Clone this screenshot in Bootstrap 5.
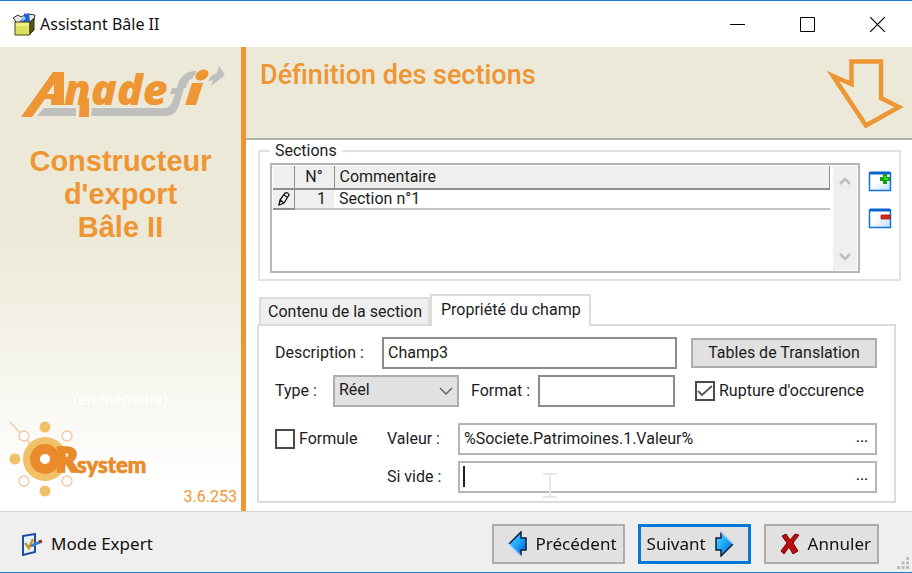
<!DOCTYPE html>
<html lang="fr">
<head>
<meta charset="utf-8">
<meta name="viewport" content="width=device-width, initial-scale=1">
<title>Assistant Bâle II</title>
<link href="https://cdn.jsdelivr.net/npm/bootstrap@5.3.0/dist/css/bootstrap.min.css" rel="stylesheet">
<style>
  body { font: 16px/20px Roboto, "Liberation Sans", sans-serif; color: #1c1c1c; background: #fff; }
  .win { border-top: 1px solid #1a7fd0; border-bottom: 1px solid #1a7fd0; }
  .ui-font { font-family: "Noto Sans", "Open Sans", sans-serif; color: #111; }
  .title-bar { height: 46px; padding-left: 12px; }
  .win-btn { width: 70px; height: 46px; border: 0; background: none; padding: 0; }
  .side { width: 246px; border-right: 5px solid #ee9634; color: #ee9634;
    background: linear-gradient(#ece9d8 0, #ece9d8 40%, #fff 95%); }
  .side-title { font: bold 29px/33px "Liberation Sans", Arial, sans-serif; }
  .memo { color: #fff; }
  .content { min-width: 0; }
  .head { background: #ece9d8; border-bottom: 2px solid #b0b0ac; height: 93px; padding: 11px 8px 0 14px; }
  .head h1 { font: 500 27px/34px Roboto, sans-serif; color: #ee9634; margin: 0; }
  .work { padding: 2px 11px 0 12px; }
  .box { border: 2px solid #e2e2e2; padding: 3px 7px 6px 10px; }
  .box legend { float: none; width: auto; font-size: 16px; line-height: 18px; padding: 0 5px; margin: 0; }
  .grid-box { border: 2px solid #b4b4bc; height: 110px; padding: 1px; }
  .grid-table { width: 100%; border-collapse: collapse; }
  .grid-table th { background: #efefef; font-weight: 400; height: 23px; padding: 0 5px; border-right: 1px solid #8e8e8e; border-bottom: 2px solid #8e8e8e; }
  .grid-table td { height: 20px; padding: 0 5px; border-bottom: 2px solid #c4c4c4; line-height: 18px; }
  .grid-table .dim { background: #efefef; }
  .grid-table .mark-cell { border-right: 1px solid #8e8e8e; border-bottom-color: #8e8e8e; padding: 0 3px; }
  .c-mark { width: 21px; } .c-num { width: 40px; }
  .scroller { width: 24px; margin-left: 3px; background: #efefef; padding: 10px 0 8px; }
  .tool { border: 0; background: none; padding: 0; display: block; }
  .tabs { padding-left: 1px; margin-top: 13px; }
  .tab-btn { font: inherit; color: inherit; border: 2px solid #dcdcdc; border-bottom: 0; background: #efefef; height: 27px; padding: 0 6px 0 7px; }
  .tab-btn.active { background: #fff; height: 32px; padding: 0 8px 3px 9px; margin-bottom: -2px; }
  .pane { border: 2px solid #dcdcdc; padding: 11px 17px 8px 16px; margin-right: 5px; margin-left: -1px; }
  .line-gap { margin-top: 6px; }
  .field, .pick { font: inherit; color: inherit; height: 32px; border: 2px solid #8c8c8c; border-radius: 0; background-color: #fff; padding: 0 4px 2px; min-width: 0; }
  .field { width: 0; }
  .pick { width: 100%; background: #e1e1e1; border-color: #adadad; appearance: none; }
  .pick-wrap { width: 126px; position: relative; }
  .pick-wrap svg { position: absolute; right: 6px; top: 11px; pointer-events: none; }
  .lined { border: 2px solid #b4b4bc; height: 32px; }
  .lined input { border: 0; outline: 0; font: inherit; color: inherit; padding: 0 4px; min-width: 0; }
  .lined button { border: 0; background: none; width: 26px; padding: 0 0 4px; }
  .flat { font: inherit; color: inherit; background: #e1e1e1; border: 2px solid #adadad; }
  .w-desc { width: 107px; } .w-type { width: 58px; } .w-form { width: 112px; } .w-val { width: 71px; }
  .w-right { width: 186px; flex-shrink: 0; }
  .w-table { margin-left: 14px; height: 30px; }
  .w-check { margin-left: 16px; }
  .tick { appearance: none; width: 20px; height: 20px; margin: 0; border: 2px solid #4a4a4a; background: #fff; }
  .tick:checked { background: #fff url("data:image/svg+xml,%3Csvg xmlns='http://www.w3.org/2000/svg' viewBox='0 0 16 16'%3E%3Cpath d='M1 8l4 4L15 3' fill='none' stroke='%23555' stroke-width='1.8'/%3E%3C/svg%3E"); }
  .lined #vide { caret-color: transparent; }
  .caret { position: absolute; left: 3px; top: 3px; width: 2px; height: 21px; background: #222; }
  .cursor { position: absolute; left: 83px; top: 10px; }
  .foot { background: #efefef; border-top: 1px solid #d4d4d4; height: 61px; padding: 4px 33px 0 21px; position: relative; font-size: 17px; }
  .foot .flat { height: 40px; padding: 0 6px; }
  .foot .main-act { border: 3px solid #0078d7; }
  .foot-acts { gap: 13px; }
  .grip { position: absolute; right: 2px; bottom: 2px; }
  svg { display: block; }
</style>
<script src="https://cdn.jsdelivr.net/npm/bootstrap@5.3.0/dist/js/bootstrap.bundle.min.js"></script>
</head>
<body>
<div class="win d-flex flex-column min-vh-100">
  <header class="title-bar ui-font d-flex align-items-center">
    <svg width="24" height="24" viewBox="0 0 24 24"><path d="M1 6l5-3 3 2 6-3 8 1-2 8H4l-1-3z" fill="#e8e8e8" stroke="#333"/><path d="M7 10l5-5V1l3 2 2-2 1 9z" fill="#1e5fd8"/><path d="M12 4l2 3-5 3z" fill="#7fd0ff"/><path d="M3 10h15v13H3z" fill="#dede60" stroke="#4d4d10"/><path d="M18 10l4-4v12l-4 4z" fill="#55551a" stroke="#333310"/><path d="M4 11h13v3H4z" fill="#f0ef90"/></svg>
    <span class="ms-1 flex-grow-1">Assistant Bâle II</span>
    <button class="win-btn" aria-label="Réduire"><svg class="m-auto" width="15" height="15"><path d="M0 7.500h15" stroke="#000"/></svg></button>
    <button class="win-btn" aria-label="Agrandir"><svg class="m-auto" width="15" height="15"><path d="M.5.5h14v14H.5z" fill="none" stroke="#000"/></svg></button>
    <button class="win-btn" aria-label="Fermer"><svg class="m-auto" width="15" height="15"><path d="M0 0l15 15M15 0L0 15" stroke="#000" stroke-width="1.200"/></svg></button>
  </header>

  <div class="d-flex flex-grow-1">
    <aside class="side flex-shrink-0 d-flex flex-column">
      <svg width="241" height="90" viewBox="0 47 241 90" role="img" aria-label="Anadefi">
        <path d="M44 108H76V116H37zM92 108H164Q170 108 172 102L175 94H170L172 88H177Q181 70 197 71L192 79Q188 79 186 88H184L179 105Q176 116 166 116H91z" fill="#bfbfbf"/>
        <path d="M208 81Q211 74 217 73L219 66 225 75 211 86 213 80z" fill="#bfbfbf"/>
        <g fill="#ee9634" font-family="Open Sans" font-weight="800" font-style="italic" font-size="43">
          <path fill-rule="evenodd" d="M21 117L53 72H64V105H51V99H45L32 117zM47 94H54V84z"/>
          <text x="64" y="105">nade</text>
          <path d="M80 100L89 98V117H79zM185 105L192 83H203L196 105z"/>
          <ellipse cx="202" cy="75" rx="7" ry="5" transform="rotate(-30 202 75)"/>
        </g>
      </svg>
      <div class="side-title text-center mt-1 pt-1">Constructeur<br>d'export<br>Bâle II</div>
      <div class="memo text-center mt-auto">(en mémoire)</div>
      <div class="d-flex align-items-end justify-content-between mt-2 pe-1">
        <svg width="150" height="93" viewBox="0 418 150 93" role="img" aria-label="ORsystem">
          <g fill="none" stroke="#f3c7a0" stroke-width="1.300"><path d="M10 422L34 448"/><g fill="#fff"><circle cx="24" cy="436" r="5"/><circle cx="67" cy="436" r="5"/><circle cx="24" cy="481" r="5"/><circle cx="67" cy="481" r="5"/></g></g>
          <g fill="#f1c168"><circle cx="45" cy="459" r="22"/><circle cx="45" cy="427" r="5.500"/><circle cx="45" cy="491" r="5.500"/><circle cx="15" cy="459" r="5.500"/></g>
          <circle cx="45" cy="459" r="10" fill="none" stroke="#e98a2b" stroke-width="10"/><circle cx="45" cy="459" r="5" fill="#fff"/>
          <g fill="#e98a2b" stroke="#e98a2b" font-weight="900"><text x="55" y="472" font-family="Open Sans" font-size="35" stroke-width="1.500">R</text><text x="77" y="473" font-family="Lato" font-size="22" stroke-width=".7">system</text></g>
        </svg>
        <span class="pb-1">3.6.253</span>
      </div>
    </aside>

    <main class="content flex-grow-1">
      <div class="head d-flex justify-content-between align-items-start">
        <h1>Définition des sections</h1>
        <svg class="flex-shrink-0" width="78" height="72" viewBox="826 57 78 72"><path fill="none" stroke="#ee9634" stroke-width="4.500" d="M851.500 60.500H881V97L899 106 866 124.500 833 75 851.500 83z"/><path d="M826 69l14 9-2 3z" fill="#ee9634"/></svg>
      </div>
      <div class="work">
        <fieldset class="box">
          <legend>Sections</legend>
          <div class="d-flex">
            <div class="grid-box flex-grow-1 d-flex">
              <div class="flex-grow-1">
                <table class="grid-table">
                  <thead><tr><th class="c-mark"></th><th class="c-num text-center">N°</th><th>Commentaire</th></tr></thead>
                  <tbody><tr><td class="dim mark-cell"><svg class="m-auto" width="13" height="16" viewBox="0 0 13 16"><path d="M2 14l1-5 5-7q3-1 4 2l-5 8zM3 9l4 3M7 4l3 2" fill="none" stroke="#111" stroke-width="1.300"/></svg></td><td class="dim text-end pe-2">1</td><td>Section n°1</td></tr></tbody>
                </table>
              </div>
              <div class="scroller d-flex flex-column justify-content-between align-items-center">
                <svg width="12" height="9"><path d="M1 8l5-5 5 5" fill="none" stroke="#bdbdbd" stroke-width="2.500"/></svg>
                <svg width="12" height="9"><path d="M1 1l5 5 5-5" fill="none" stroke="#bdbdbd" stroke-width="2.500"/></svg>
              </div>
            </div>
            <div class="d-flex flex-column gap-3 ps-2 pt-2">
              <button class="tool" aria-label="Ajouter"><svg width="24" height="21" viewBox="0 0 24 21"><defs><linearGradient id="g1" x2="1" y2="1"><stop offset=".4" stop-color="#fff"/><stop offset="1" stop-color="#bcdcfb"/></linearGradient></defs><path d="M1.500 2h21v17.500h-21z" fill="url(#g1)" stroke="#1672d6" stroke-width="1.500"/><path d="M2 .5h20l1 3H1z" fill="#0b62cc"/><path d="M15 3h4v3h3v4h-3v3h-4v-3h-3V6h3z" fill="#12a012"/><path d="M16 5h2v2h2v2h-4z" fill="#35d835"/></svg></button>
              <button class="tool" aria-label="Supprimer"><svg width="24" height="21" viewBox="0 0 24 21"><path d="M1.500 2h21v17.500h-21z" fill="url(#g1)" stroke="#1672d6" stroke-width="1.500"/><path d="M2 .5h20l1 3H1z" fill="#0b62cc"/><path d="M13 7h9v4h-9z" fill="#cf2a1b" stroke="#a31a10" stroke-width=".8"/></svg></button>
            </div>
          </div>
        </fieldset>

        <div class="tabs d-flex align-items-end" role="tablist">
          <button class="tab-btn" role="tab">Contenu de la section</button>
          <button class="tab-btn active" role="tab" aria-selected="true">Propriété du champ</button>
        </div>
        <div class="pane">
          <div class="d-flex align-items-center">
            <label class="w-desc" for="desc">Description :</label>
            <input class="field flex-grow-1" id="desc" value="Champ3">
            <button class="flat w-right w-table">Tables de Translation</button>
          </div>
          <div class="d-flex align-items-center line-gap">
            <label class="w-type" for="type">Type :</label>
            <div class="pick-wrap"><select class="pick" id="type"><option>Réel</option></select><svg width="14" height="10"><path d="M1 2l6 6 6-6" fill="none" stroke="#666" stroke-width="1.500"/></svg></div>
            <label class="px-2 ms-1 text-nowrap" for="fmt">Format :</label>
            <input class="field flex-grow-1" id="fmt">
            <div class="w-right w-check ps-1 d-flex align-items-center gap-1"><input class="tick flex-shrink-0" type="checkbox" id="rupt" checked><label class="text-nowrap" for="rupt">Rupture d'occurence</label></div>
          </div>
          <div class="d-flex align-items-center mt-3">
            <div class="w-form d-flex align-items-center gap-1"><input class="tick" type="checkbox" id="frm"><label for="frm">Formule</label></div>
            <label class="w-val" for="val">Valeur :</label>
            <div class="lined flex-grow-1 d-flex"><input class="flex-grow-1" id="val" value="%Societe.Patrimoines.1.Valeur%"><button aria-label="Choisir la valeur">...</button></div>
          </div>
          <div class="d-flex align-items-center line-gap">
            <div class="w-form"></div>
            <label class="w-val" for="vide">Si vide :</label>
            <div class="lined flex-grow-1 d-flex position-relative"><input class="flex-grow-1" id="vide" autofocus><button aria-label="Choisir la valeur si vide">...</button>
              <span class="caret"></span>
              <svg class="cursor" width="14" height="25"><path d="M0 1h14M0 24h14M7 1v23" stroke="#e8e8e8" stroke-width="2"/></svg></div>
          </div>
        </div>
      </div>
    </main>
  </div>

  <footer class="foot ui-font d-flex align-items-center">
    <svg width="22" height="23" viewBox="0 0 22 23"><path d="M2 3l12-2v18L2 22z" fill="#e6f1fc" stroke="#1d4f9c" stroke-width="2"/><path d="M4 10l4 5 4-9" fill="none" stroke="#c9961c" stroke-width="2.500"/><path d="M10 13l9-4" stroke="#3a7fd0" stroke-width="3"/><path d="M18 9l3-1" stroke="#a03030" stroke-width="3"/></svg>
    <span class="ms-2 flex-grow-1">Mode Expert</span>
    <div class="foot-acts d-flex align-items-center">
      <button class="flat d-flex align-items-center"><svg class="mx-2" width="20" height="26" viewBox="0 0 20 26"><defs><linearGradient id="g2" x2="1" y2="1"><stop stop-color="#5fd8ff"/><stop offset=".5" stop-color="#18a8ff"/><stop offset="1" stop-color="#0650c0"/></linearGradient></defs><path d="M1 13L13 1v6h5v12h-5v6z" fill="url(#g2)"/><path d="M1 13L13 1v6h5v12h-5v6" fill="none" stroke="#101c38" stroke-width="1.500"/><path d="M1 13L13 25" stroke="#9fc4ff" stroke-width="1.500"/></svg><span>Précédent</span></button>
      <button class="flat main-act d-flex align-items-center"><span>Suivant</span><svg class="mx-2" width="20" height="26" viewBox="0 0 20 26"><path d="M19 13L7 1v6H2v12h5v6z" fill="url(#g2)"/><path d="M7 1v6H2v12h5v6l12-12" fill="none" stroke="#101c38" stroke-width="1.500"/><path d="M7 1l12 12" stroke="#9fc4ff" stroke-width="1.500"/></svg></button>
      <button class="flat d-flex align-items-center"><svg class="mx-2" width="20" height="22" viewBox="0 0 20 22"><path d="M2 3l4-2 4 6 5-6 4 1-6 8 5 8-5 3-4-7-5 7-3-3 6-8z" fill="#b80e0e" stroke="#7a0505"/></svg><span>Annuler</span></button>
    </div>
    <svg class="grip" width="14" height="14"><path d="M10 1h3v3h-3zM10 5.500h3v3h-3zM5.500 5.500h3v3h-3zM10 10h3v3h-3zM5.500 10h3v3h-3zM1 10h3v3H1z" fill="#bdbdbd"/></svg>
  </footer>
</div>
</body>
</html>
